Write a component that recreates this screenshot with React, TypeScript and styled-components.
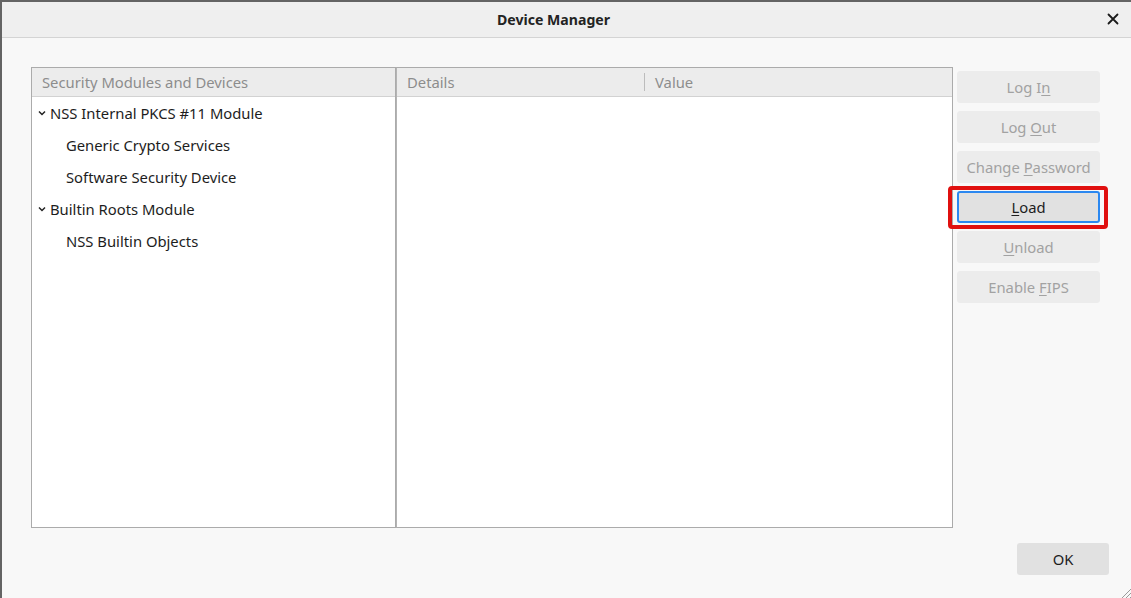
import styled, { createGlobalStyle } from 'styled-components';

const GlobalStyle = createGlobalStyle`
  html, body {
    margin: 0;
    padding: 0;
    background: #f8f8f8;
  }
  body {
    font-family: "Noto Sans", "Open Sans", sans-serif;
    overflow: hidden;
  }
`

const Window = styled.div`
  width: 1131px;
  height: 598px;
  box-sizing: border-box;
  border-top: 2px solid #646464;
  border-left: 2px solid #646464;
  background: #f8f8f8;
  display: flex;
  flex-direction: column;
  position: relative;
`

const TitleBar = styled.div`
  height: 35px;
  flex-shrink: 0;
  background: #efefef;
  border-bottom: 1px solid #d4d4d4;
  display: flex;
  align-items: center;
  justify-content: center;
  position: relative;
`

const Title = styled.h1`
  margin: 0 0 1px -26px;
  font-size: 14.1px;
  font-weight: 700;
  color: #232323;
`

const CloseButton = styled.button`
  position: absolute;
  right: 10px;
  top: 9px;
  width: 16px;
  height: 16px;
  padding: 0;
  border: none;
  background: none;
  display: flex;
  align-items: center;
  justify-content: center;
`

const Body = styled.div`
  flex: 1;
  display: flex;
  flex-direction: column;
  padding: 29px 22px 0 29px;
`

const MainRow = styled.div`
  display: flex;
  align-items: flex-start;
`

const Pane = styled.div<{ $width: number; $joined?: boolean }>`
  width: ${p => p.$width}px;
  height: 461px;
  box-sizing: border-box;
  border: 1px solid #ababab;
  ${p => p.$joined && 'border-left-color: #b4b4b4;'}
  background: #ffffff;
  display: flex;
  flex-direction: column;
`

const Header = styled.div`
  height: 29px;
  flex-shrink: 0;
  box-sizing: border-box;
  padding-bottom: 1px;
  background: #ececec;
  border-bottom: 1px solid #d2d2d2;
  display: flex;
  align-items: center;
  font-size: 14.8px;
  color: #8d8d8d;
`

const HeaderCell = styled.div<{ $width?: number; $divider?: boolean }>`
  ${p => p.$width ? `width: ${p.$width}px;` : 'flex: 1;'}
  box-sizing: border-box;
  padding-left: 10px;
  height: 18px;
  line-height: 18px;
  ${p => p.$divider && 'border-left: 1px solid #bcbcbc;'}
`

const TreeRow = styled.div<{ $depth: number }>`
  height: 32px;
  box-sizing: border-box;
  padding-bottom: 1px;
  display: flex;
  align-items: center;
  padding-left: ${p => p.$depth ? 34 : 6}px;
  font-size: 14.8px;
  color: #1d1d1d;
`

const Chevron = styled.svg`
  width: 8px;
  height: 6px;
  margin-right: 4px;
  margin-top: 1px;
`

const ButtonColumn = styled.div`
  width: 143px;
  margin-left: 4px;
  margin-top: 4px;
  display: flex;
  flex-direction: column;
  gap: 8px;
`

const ActionButton = styled.button<{ $active?: boolean }>`
  position: relative;
  height: 32px;
  box-sizing: border-box;
  border-radius: 3px;
  border: ${p => p.$active ? '2px solid #2b88f0' : '1px solid #ececec'};
  background: ${p => p.$active ? '#e1e1e1' : '#ececec'};
  color: ${p => p.$active ? '#1d1d1d' : '#a2a2a2'};
  font-family: "Noto Sans", "Open Sans", sans-serif;
  font-size: 14.8px;
  padding: 0;
  cursor: default;
`

const Highlight = styled.span`
  position: absolute;
  left: -11px;
  right: -10px;
  top: -7px;
  bottom: -8px;
  border: 4px solid #e0100f;
  border-radius: 4px;
  pointer-events: none;
`

const Key = styled.span`
  text-decoration: underline;
  text-underline-offset: 2px;
`

const Footer = styled.div`
  display: flex;
  justify-content: flex-end;
  margin-top: 15px;
`

const OkButton = styled.button`
  width: 92px;
  height: 32px;
  border: none;
  border-radius: 3px;
  background: #e1e1e1;
  color: #1d1d1d;
  font-family: "Noto Sans", "Open Sans", sans-serif;
  font-size: 14.8px;
`

const Grip = styled.svg`
  position: absolute;
  right: 0;
  bottom: 0;
  width: 12px;
  height: 12px;
`

const tree = [
  { label: 'NSS Internal PKCS #11 Module', depth: 0 },
  { label: 'Generic Crypto Services', depth: 1 },
  { label: 'Software Security Device', depth: 1 },
  { label: 'Builtin Roots Module', depth: 0 },
  { label: 'NSS Builtin Objects', depth: 1 },
];

const buttons: { pre: string; key: string; post: string; active?: boolean }[] = [
  { pre: 'Log I', key: 'n', post: '' },
  { pre: 'Log ', key: 'O', post: 'ut' },
  { pre: 'Change ', key: 'P', post: 'assword' },
  { pre: '', key: 'L', post: 'oad', active: true },
  { pre: '', key: 'U', post: 'nload' },
  { pre: 'Enable ', key: 'F', post: 'IPS' },
];

const App = () => {
  return (
    <Window>
      <GlobalStyle />
      <TitleBar>
        <Title>Device Manager</Title>
        <CloseButton aria-label="Close">
          <svg width="12" height="12" viewBox="0 0 12 12">
            <path d="M1.5 1.5 L10.5 10.5 M10.5 1.5 L1.5 10.5" stroke="#1a1a1a" strokeWidth="1.8" strokeLinecap="round" />
          </svg>
        </CloseButton>
      </TitleBar>
      <Body>
        <MainRow>
          <Pane $width={365}>
            <Header>
              <HeaderCell>Security Modules and Devices</HeaderCell>
            </Header>
            {tree.map(item => (
              <TreeRow key={item.label} $depth={item.depth}>
                {item.depth === 0 && (
                  <Chevron viewBox="0 0 8 6">
                    <path d="M1 1.5 L4 4.5 L7 1.5" fill="none" stroke="#222" strokeWidth="1.5" />
                  </Chevron>
                )}
                {item.label}
              </TreeRow>
            ))}
          </Pane>
          <Pane $width={557} $joined>
            <Header>
              <HeaderCell $width={247}>Details</HeaderCell>
              <HeaderCell $divider>Value</HeaderCell>
            </Header>
          </Pane>
          <ButtonColumn>
            {buttons.map(b => (
              <ActionButton key={b.pre + b.key} $active={b.active} disabled={!b.active}>
                {b.pre}<Key>{b.key}</Key>{b.post}
                {b.active && <Highlight />}
              </ActionButton>
            ))}
          </ButtonColumn>
        </MainRow>
        <Footer>
          <OkButton>OK</OkButton>
        </Footer>
      </Body>
      <Grip viewBox="0 0 12 12">
        <path d="M12 3 L3 12 M12 7 L7 12 M12 11 L11 12" stroke="#9a9a9a" strokeWidth="1" />
      </Grip>
    </Window>
  );
};

export default App;
